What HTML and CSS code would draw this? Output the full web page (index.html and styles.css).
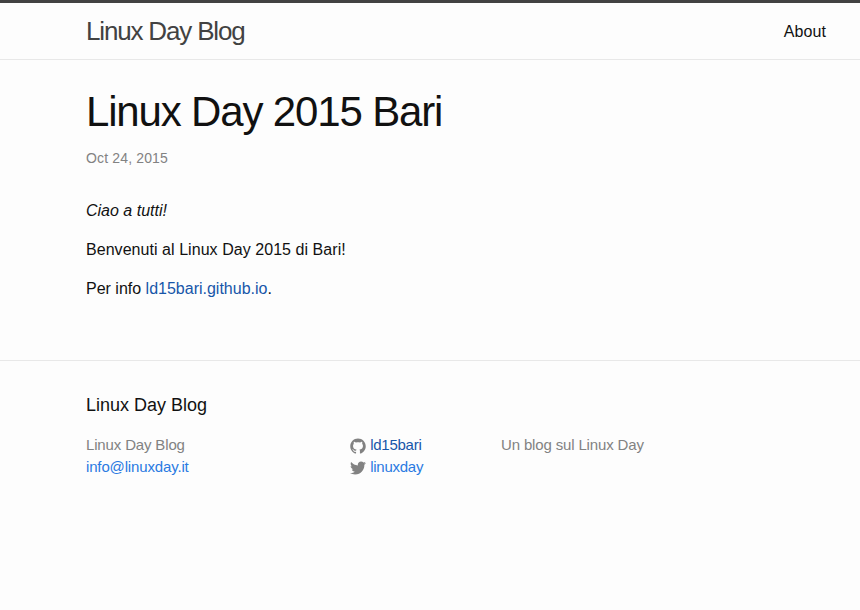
FILE: index.html
```html
<!DOCTYPE html>
<html lang="it">
<head>
<meta charset="utf-8">
<title>Linux Day 2015 Bari</title>
<link rel="stylesheet" href="styles.css">
</head>
<body>
<header class="site-header">
  <div class="wrapper header-row">
    <a class="site-title" href="#">Linux Day Blog</a>
    <nav class="site-nav"><a class="page-link" href="#">About</a></nav>
  </div>
</header>
<main class="page-content">
  <article class="wrapper">
    <header class="post-header">
      <h1 class="post-title">Linux Day 2015 Bari</h1>
      <p class="post-meta">Oct 24, 2015</p>
    </header>
    <div class="post-content">
      <p class="greeting"><em>Ciao a tutti!</em></p>
      <p class="welcome">Benvenuti al Linux Day 2015 di Bari!</p>
      <p>Per info <a class="visited" href="#">ld15bari.github.io</a>.</p>
    </div>
  </article>
</main>
<footer class="site-footer">
  <div class="wrapper">
    <h2 class="footer-heading">Linux Day Blog</h2>
    <div class="footer-cols">
      <ul class="footer-list">
        <li>Linux Day Blog</li>
        <li><a href="#">info@linuxday.it</a></li>
      </ul>
      <ul class="footer-list social">
        <li><a class="visited" href="#"><span class="icon"><svg viewBox="0 0 16 16"><path fill="#828282" d="M7.999,0.431c-4.285,0-7.76,3.474-7.76,7.761 c0,3.428,2.223,6.337,5.307,7.363c0.388,0.071,0.53-0.168,0.53-0.374c0-0.184-0.007-0.672-0.01-1.32 c-2.159,0.469-2.614-1.04-2.614-1.04c-0.353-0.896-0.862-1.135-0.862-1.135c-0.705-0.481,0.053-0.472,0.053-0.472 c0.779,0.055,1.189,0.8,1.189,0.8c0.692,1.186,1.816,0.843,2.258,0.645c0.071-0.502,0.271-0.843,0.493-1.037 C4.86,11.425,3.049,10.76,3.049,7.786c0-0.847,0.302-1.54,0.799-2.082C3.768,5.507,3.501,4.718,3.924,3.65 c0,0,0.652-0.209,2.134,0.796C6.677,4.273,7.34,4.187,8,4.184c0.659,0.003,1.323,0.089,1.943,0.261 c1.482-1.004,2.132-0.796,2.132-0.796c0.423,1.068,0.157,1.857,0.077,2.054c0.497,0.542,0.798,1.235,0.798,2.082 c0,2.981-1.814,3.637-3.543,3.829c0.279,0.24,0.527,0.713,0.527,1.437c0,1.037-0.01,1.874-0.01,2.129 c0,0.208,0.14,0.449,0.534,0.373c3.081-1.028,5.302-3.935,5.302-7.362C15.76,3.906,12.285,0.431,7.999,0.431z"/></svg></span> <span class="handle">ld15bari</span></a></li>
        <li><a href="#"><span class="icon"><svg viewBox="0 0 16 16"><path fill="#828282" d="M15.969,3.058c-0.586,0.26-1.217,0.436-1.878,0.515c0.675-0.405,1.194-1.045,1.438-1.809c-0.632,0.375-1.332,0.647-2.076,0.793c-0.596-0.636-1.446-1.033-2.387-1.033c-1.806,0-3.27,1.464-3.27,3.27 c0,0.256,0.029,0.506,0.085,0.745C5.163,5.404,2.753,4.102,1.14,2.124C0.859,2.607,0.698,3.168,0.698,3.767 c0,1.134,0.577,2.135,1.455,2.722C1.616,6.472,1.112,6.325,0.671,6.08c0,0.014,0,0.027,0,0.041c0,1.584,1.127,2.906,2.623,3.206 C3.02,9.402,2.731,9.442,2.433,9.442c-0.211,0-0.416-0.021-0.615-0.059c0.416,1.299,1.624,2.245,3.055,2.271 c-1.119,0.877-2.529,1.4-4.061,1.4c-0.264,0-0.524-0.015-0.78-0.046c1.447,0.928,3.166,1.469,5.013,1.469 c6.015,0,9.304-4.983,9.304-9.304c0-0.142-0.003-0.283-0.009-0.423C14.976,4.29,15.531,3.714,15.969,3.058z"/></svg></span> <span class="handle">linuxday</span></a></li>
      </ul>
      <p class="footer-text">Un blog sul Linux Day</p>
    </div>
  </div>
</footer>
</body>
</html>
```
FILE: styles.css
```css
* { box-sizing: border-box; }
body, h1, h2, p, ul { margin: 0; padding: 0; font-size: inherit; font-weight: 400; }
body {
  font-family: "Liberation Sans", Arial, sans-serif;
  font-size: 16px;
  line-height: 1.5;
  color: #111;
  background: #fdfdfd;
}
a { color: #2a7ae2; text-decoration: none; }
a.visited { color: #1756a9; }
.wrapper { max-width: 800px; margin: 0 auto; padding: 0 4px 0 56px; }
.site-header { border-top: 3px solid #424242; border-bottom: 1px solid #e8e8e8; height: 60px; }
.header-row { display: flex; justify-content: space-between; line-height: 56px; }
.site-title { font-size: 26px; letter-spacing: -1.17px; color: #424242; }
.site-nav { line-height: 58px; height: 56px; }
.page-link { color: #111; letter-spacing: 0.1px; }
.page-content { padding: 30px 0 29px; }
.post-header { margin-bottom: 30px; }
.post-title { font-size: 42px; letter-spacing: -1.16px; line-height: 44px; margin-bottom: 14px; }
.post-meta { font-size: 14px; letter-spacing: 0.15px; color: #828282; }
.post-content { margin-bottom: 30px; }
.post-content p { margin-bottom: 15px; }
.post-content .welcome { letter-spacing: 0.05px; }
.site-footer { border-top: 1px solid #e8e8e8; padding: 31px 0 30px; }
.footer-heading { font-size: 18px; margin-bottom: 15px; }
.footer-cols { display: grid; grid-template-columns: 264px 151px 1fr; font-size: 15px; line-height: 22px; letter-spacing: -0.15px; color: #828282; }
.footer-list { list-style: none; }
.social { letter-spacing: 0; }
.handle { letter-spacing: -0.25px; }
.icon svg { display: inline-block; width: 16px; height: 16px; vertical-align: middle; }
```
